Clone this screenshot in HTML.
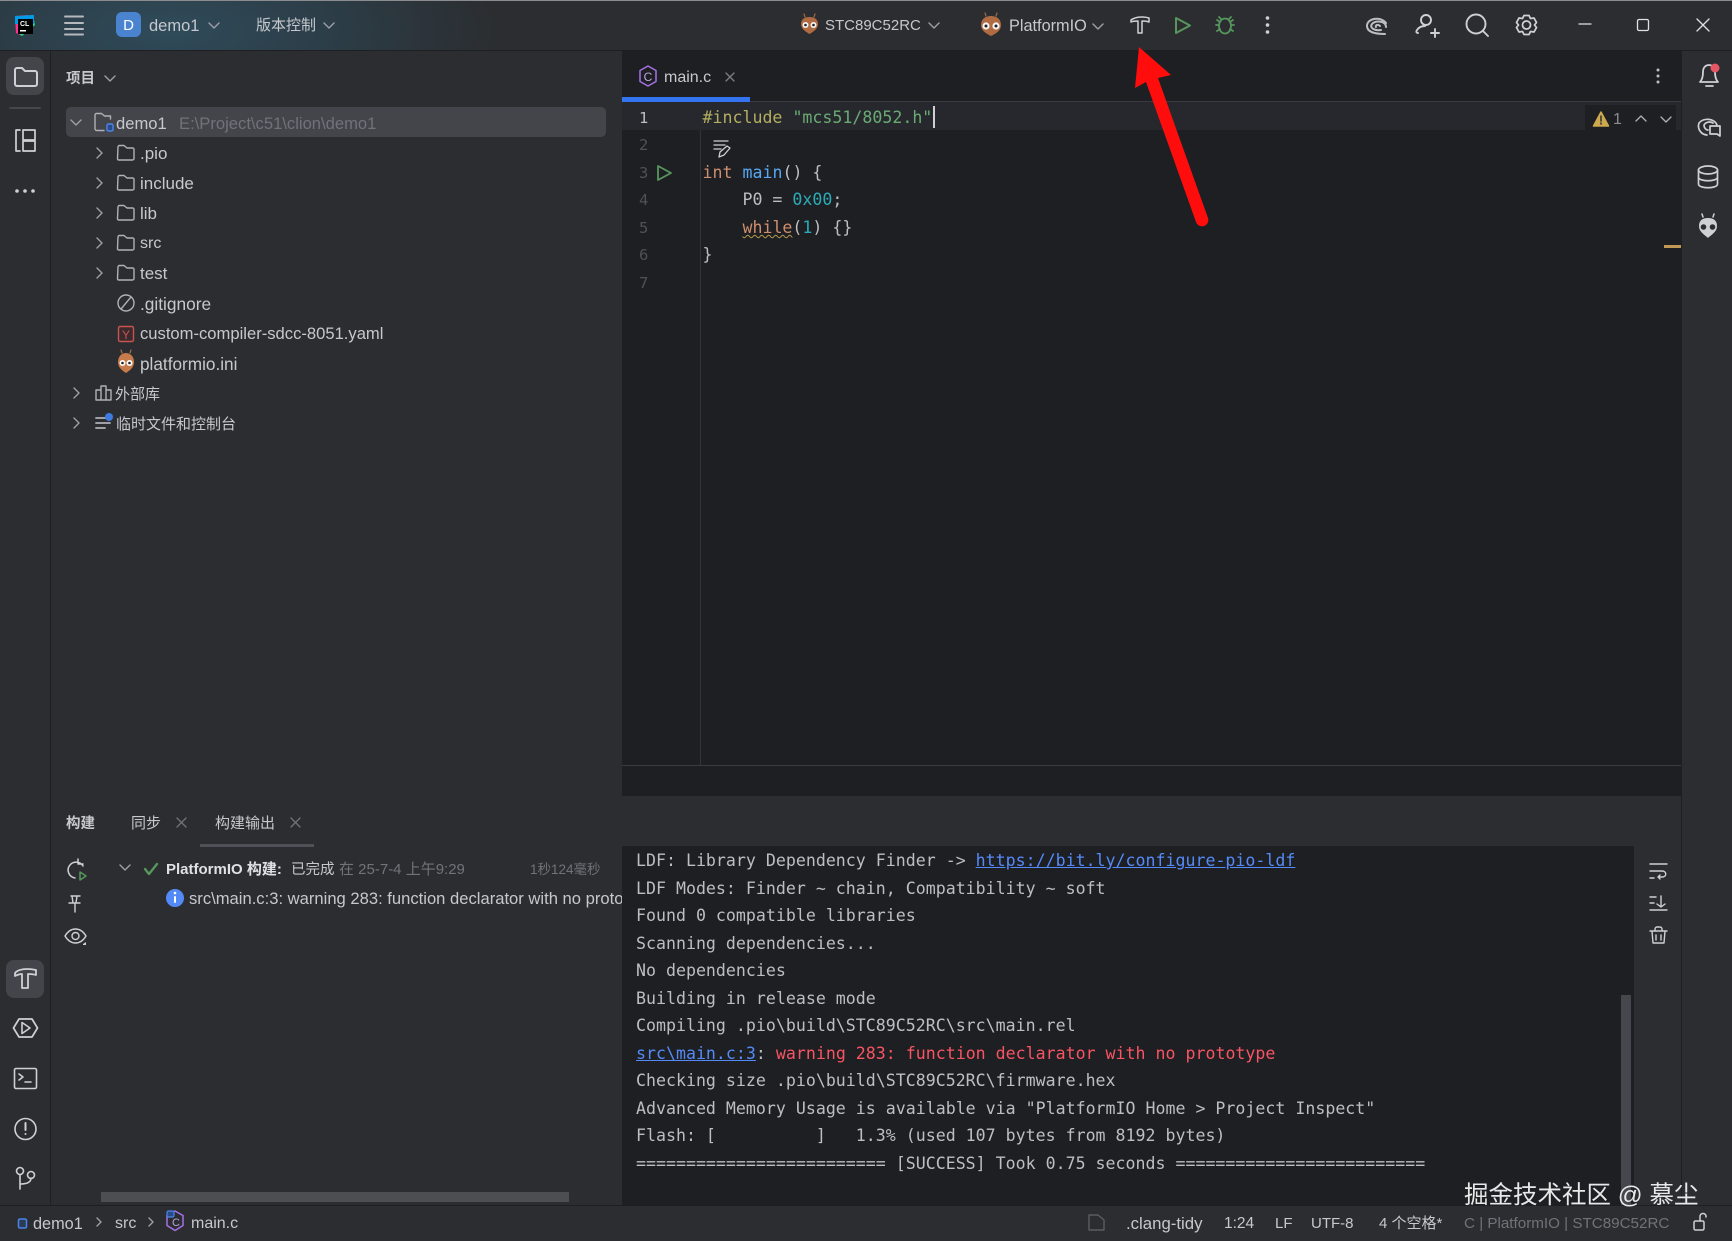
<!DOCTYPE html>
<html><head><meta charset="utf-8"><style>
*{box-sizing:border-box}
html,body{margin:0;padding:0;width:1732px;height:1241px;overflow:hidden;background:#1e1f22}
body{position:relative;font-family:"Liberation Sans","Noto Sans CJK SC",sans-serif;color:#bcbec4}
.b{position:absolute}
.t{position:absolute;white-space:pre;font-size:16.6px;line-height:20px;height:20px;margin-top:1px;color:#c6c8ce}
.m{position:absolute;white-space:pre;left:636px;font-family:"DejaVu Sans Mono","Liberation Mono",monospace;font-size:16.6px;line-height:20px;height:20px;color:#bcbec4}
.e{left:702.5px}
.n{position:absolute;left:639px;font-family:"DejaVu Sans Mono",monospace;font-size:15.5px;line-height:20px;color:#4e5157}
a{color:#548af7;text-decoration:underline}
svg{position:absolute;left:0;top:0}
</style></head><body>
<div class="b" style="left:0;top:0;width:1732px;height:50px;background:radial-gradient(ellipse 330px 130px at 170px 30px,#2f4b5a 0%,#2c3d47 50%,#2b2d30 100%)"></div>
<div class="b" style="left:0;top:0;width:1732px;height:1px;background:#8a8c90"></div>
<div class="b" style="left:0;top:50px;width:622px;height:746px;background:#2b2d30"></div>
<div class="b" style="left:0;top:796px;width:51px;height:409px;background:#2b2d30"></div>
<div class="b" style="left:0;top:50px;width:1732px;height:1px;background:#1e1f22"></div>
<div class="b" style="left:50px;top:51px;width:1px;height:1154px;background:#1e1f22"></div>
<div class="b" style="left:1681px;top:51px;width:51px;height:1154px;background:#2b2d30"></div>
<div class="b" style="left:1681px;top:51px;width:1px;height:1154px;background:#1e1f22"></div>
<div class="b" style="left:51px;top:796px;width:1630px;height:50px;background:#2b2d30"></div>
<div class="b" style="left:51px;top:846px;width:571px;height:359px;background:#2b2d30"></div>
<div class="b" style="left:622px;top:101px;width:1059px;height:1px;background:#393b40"></div>
<div class="b" style="left:622px;top:765px;width:1059px;height:1px;background:#393b40"></div>
<div class="b" style="left:700px;top:102px;width:1px;height:663px;background:#313438"></div>
<div class="b" style="left:622px;top:102px;width:1059px;height:28px;background:#26282e"></div>
<div class="b" style="left:1585px;top:105px;width:91px;height:27px;background:#1e1f22"></div>
<div class="b" style="left:622px;top:97px;width:128px;height:5px;background:#3574f0"></div>
<div class="b" style="left:1634px;top:846px;width:47px;height:359px;background:#2b2d30"></div>
<div class="b" style="left:0;top:1205px;width:1732px;height:36px;background:#2b2d30;border-top:1px solid #1e1f22"></div>
<div class="b" style="left:66px;top:107px;width:540px;height:30px;background:#43454a;border-radius:5px"></div>
<div class="b" style="left:6px;top:57px;width:38px;height:38px;background:#43454a;border-radius:8px"></div>
<div class="b" style="left:6px;top:960px;width:38px;height:38px;background:#43454a;border-radius:8px"></div>
<div class="b" style="left:200px;top:844px;width:114px;height:3px;background:#4e5157"></div>
<div class="b" style="left:101px;top:1192px;width:468px;height:10px;background:#4c4e52"></div>
<div class="b" style="left:1621px;top:995px;width:10px;height:210px;background:#45474c"></div>
<div class="b" style="left:1664px;top:245px;width:17px;height:3px;background:#c09a55"></div>
<div class="b" style="left:933px;top:106px;width:2px;height:22px;background:#ced0d6"></div>

<!-- titlebar text -->
<span class="t" style="left:149px;top:15px;font-size:16.5px">demo1</span>
<span class="t" style="left:256px;top:15px;font-size:15px">版本控制</span>
<span class="t" style="left:825px;top:15px;font-size:15px">STC89C52RC</span>
<span class="t" style="left:1009px;top:15px;font-size:16.3px">PlatformIO</span>

<!-- project panel -->
<span class="t" style="left:66px;top:68px;font-size:14.5px;font-weight:bold">项目</span>
<span class="t" style="left:116px;top:113px">demo1</span>
<span class="t" style="left:179px;top:113px;color:#6f737a">E:\Project\c51\clion\demo1</span>
<span class="t" style="left:140px;top:143px;font-size:17px">.pio</span>
<span class="t" style="left:140px;top:173px;font-size:17px">include</span>
<span class="t" style="left:140px;top:203px;font-size:17px">lib</span>
<span class="t" style="left:140px;top:233px;font-size:16px">src</span>
<span class="t" style="left:140px;top:263px;font-size:17px">test</span>
<span class="t" style="left:140px;top:293px;font-size:17.3px">.gitignore</span>
<span class="t" style="left:140px;top:323px">custom-compiler-sdcc-8051.yaml</span>
<span class="t" style="left:140px;top:353px;font-size:17.2px">platformio.ini</span>
<span class="t" style="left:115px;top:383.500px;font-size:15px">外部库</span>
<span class="t" style="left:116px;top:413.500px;font-size:15px">临时文件和控制台</span>

<!-- editor -->
<span class="t" style="left:664px;top:67px;font-size:16px">main.c</span>
<span class="n" style="top:108px;color:#bcbec4">1</span>
<span class="n" style="top:135px">2</span>
<span class="n" style="top:163px">3</span>
<span class="n" style="top:190px">4</span>
<span class="n" style="top:218px">5</span>
<span class="n" style="top:245px">6</span>
<span class="n" style="top:273px">7</span>
<span class="m e" style="top:108px"><span style="color:#b3ae60">#include</span> <span style="color:#6aab73">"mcs51/8052.h"</span></span>
<span class="m e" style="top:163px"><span style="color:#cf8e6d">int</span> <span style="color:#56a8f5">main</span>() {</span>
<span class="m e" style="top:190px">    P0 = <span style="color:#2aacb8">0x00</span>;</span>
<span class="m e" style="top:218px">    <span style="color:#cf8e6d;text-decoration:underline wavy #b59a4e;text-decoration-thickness:1px">while</span>(<span style="color:#2aacb8">1</span>) {}</span>
<span class="m e" style="top:245px">}</span>
<span class="t" style="left:1613px;top:109px;color:#8a8c90;font-size:16px">1</span>

<!-- build tabs -->
<span class="t" style="left:66px;top:813px;font-size:14.5px;font-weight:bold">构建</span>
<span class="t" style="left:131px;top:813px;font-size:15px">同步</span>
<span class="t" style="left:215px;top:813px;font-size:15px">构建输出</span>

<!-- build tree -->
<span class="t" style="left:166px;top:859px;font-size:15px"><b style="color:#dfe1e5">PlatformIO 构建:</b></span>
<span class="t" style="left:291px;top:859px;font-size:14.5px">已完成</span>
<span class="t" style="left:339px;top:859px;font-size:15px;color:#6f737a">在 25-7-4 上午9:29</span>
<span class="t" style="left:530px;top:859px;font-size:13.5px;color:#6f737a">1秒124毫秒</span>
<div class="b" style="left:189px;top:888px;width:433px;height:22px;overflow:hidden"><span class="t" style="left:0;top:0">src\main.c:3: warning 283: function declarator with no prototype</span></div>

<!-- build output -->
<span class="m" style="top:851px">LDF: Library Dependency Finder -&gt; <a>https://bit.ly/configure-pio-ldf</a></span>
<span class="m" style="top:879px">LDF Modes: Finder ~ chain, Compatibility ~ soft</span>
<span class="m" style="top:906px">Found 0 compatible libraries</span>
<span class="m" style="top:934px">Scanning dependencies...</span>
<span class="m" style="top:961px">No dependencies</span>
<span class="m" style="top:989px">Building in release mode</span>
<span class="m" style="top:1016px">Compiling .pio\build\STC89C52RC\src\main.rel</span>
<span class="m" style="top:1044px"><a>src\main.c:3</a>: <span style="color:#f75464">warning 283: function declarator with no prototype</span></span>
<span class="m" style="top:1071px">Checking size .pio\build\STC89C52RC\firmware.hex</span>
<span class="m" style="top:1099px">Advanced Memory Usage is available via "PlatformIO Home &gt; Project Inspect"</span>
<span class="m" style="top:1126px">Flash: [          ]   1.3% (used 107 bytes from 8192 bytes)</span>
<span class="m" style="top:1154px">========================= [SUCCESS] Took 0.75 seconds =========================</span>

<!-- status -->
<span class="t" style="left:33px;top:1212.500px;font-size:16.3px">demo1</span>
<span class="t" style="left:115px;top:1212.500px;font-size:16px">src</span>
<span class="t" style="left:191px;top:1212.500px;font-size:16px">main.c</span>
<span class="t" style="left:1126px;top:1212.500px;font-size:16.8px">.clang-tidy</span>
<span class="t" style="left:1224px;top:1212.500px;font-size:15.5px">1:24</span>
<span class="t" style="left:1275px;top:1212.500px;font-size:15px">LF</span>
<span class="t" style="left:1311px;top:1212.500px;font-size:15px">UTF-8</span>
<span class="t" style="left:1379px;top:1212.500px;font-size:15px">4 个空格*</span>
<span class="t" style="left:1464px;top:1212.500px;font-size:15.2px;color:#6f737a">C | PlatformIO | STC89C52RC</span>

<svg width="1732" height="1241" viewBox="0 0 1732 1241" fill="none" stroke="#ced0d6" stroke-width="1.6" stroke-linecap="round" stroke-linejoin="round">
<!-- CLion logo -->
<g stroke="none"><path d="M15 17 L33 15 L35 25 L22 36 L17 33Z" fill="#21d789"/><path d="M15 16 L28 15 L20 35 L16 33Z" fill="#ff318c"/><path d="M15 16 L34 15 L34 24 L24 24 L15 24Z" fill="#009ae5"/><rect x="18" y="19" width="15" height="15" fill="#000"/><rect x="20" y="30" width="6" height="1.5" fill="#fff"/></g>
<text x="20" y="26" font-family="Liberation Sans" font-size="7" font-weight="bold" fill="#fff" stroke="none">CL</text>
<!-- menu -->
<g stroke="#b6b8be" stroke-width="2"><path d="M65 16.5H83M65 23H83M65 29H83M65 34.5H83"/></g>
<!-- D -->
<rect x="116" y="12" width="25" height="25" rx="6" fill="#4a84d0" stroke="none"/>
<text x="128.5" y="30" text-anchor="middle" font-family="Liberation Sans" font-size="15" fill="#fff" stroke="none">D</text>
<!-- chevrons -->
<g stroke="#9da0a8" stroke-width="1.4"><path d="M209 23l5 5 5-5M324 23l5 5 5-5M105 76l5 5 5-5M929 23l5 5 5-5M1093 24l5 5 5-5"/>
<path d="M71 120l5 5 5-5M120 865l5 5 5-5"/>
<path d="M97 148l5 5-5 5M97 178l5 5-5 5M97 208l5 5-5 5M97 238l5 5-5 5M97 268l5 5-5 5M74 388l5 5-5 5M74 418l5 5-5 5"/>
<path d="M97 1218l4 4-4 4M149 1218l4 4-4 4"/></g>
<!-- left strip icons -->
<path d="M15 70a2 2 0 0 1 2-2h5l3 3h10a2 2 0 0 1 2 2v11a2 2 0 0 1-2 2H17a2 2 0 0 1-2-2Z" stroke-width="2"/>
<path d="M10 108H40" stroke="#45474c" stroke-width="2"/>
<path d="M20 130h-4v21h4M23 130h12v10H23ZM23 141h12v10H23Z" stroke-width="1.7"/>
<g fill="#ced0d6" stroke="none"><circle cx="17" cy="191" r="1.8"/><circle cx="25" cy="191" r="1.8"/><circle cx="33" cy="191" r="1.8"/></g>
<path d="M15 973c3-4 12-5 21-3l0 5c-3-1-6-1-8-1v14h-6V974c-2 0-5 1-7 2Z" stroke-width="1.8"/>
<path d="M13.500 1028L19 1019H32L37.500 1028L32 1037H19Z" stroke-width="1.7"/><path d="M22 1022.500l8 5.500-8 5.500Z" stroke-width="1.6"/>
<rect x="14.500" y="1068.500" width="22" height="20" rx="1.500"/><path d="M19 1074l4 3-4 3M25 1082h6"/>
<circle cx="25.500" cy="1129" r="10.500"/><path d="M25.500 1123v7" stroke-width="2"/><circle cx="25.500" cy="1134" r="1" fill="#ced0d6" stroke="none"/>
<circle cx="20" cy="1171" r="3.500"/><circle cx="31" cy="1175" r="3.500"/><path d="M20 1175v14M20 1184c6 0 11-1 11-6"/>
<!-- tree icons -->
<g stroke="#afb1b7" stroke-width="1.4"><path d="M95 115a1.500 1.500 0 0 1 1.500-1.500h5l3 2.500h6v3M95 115v14a2 2 0 0 0 2 1.500h7"/>
<path d="M118 147a1.500 1.500 0 0 1 1.500-1.500h4.500l3 2.500h6a1.500 1.500 0 0 1 1 1.500v9a1.500 1.500 0 0 1-1.500 1.500h-14a1.500 1.500 0 0 1-1-1.500Z"/>
<path d="M118 177a1.500 1.500 0 0 1 1.500-1.500h4.500l3 2.500h6a1.500 1.500 0 0 1 1 1.500v9a1.500 1.500 0 0 1-1.500 1.500h-14a1.500 1.500 0 0 1-1-1.500Z"/>
<path d="M118 207a1.500 1.500 0 0 1 1.500-1.500h4.500l3 2.500h6a1.500 1.500 0 0 1 1 1.500v9a1.500 1.500 0 0 1-1.500 1.500h-14a1.500 1.500 0 0 1-1-1.500Z"/>
<path d="M118 237a1.500 1.500 0 0 1 1.500-1.500h4.500l3 2.500h6a1.500 1.500 0 0 1 1 1.500v9a1.500 1.500 0 0 1-1.500 1.500h-14a1.500 1.500 0 0 1-1-1.500Z"/>
<path d="M118 267a1.500 1.500 0 0 1 1.500-1.500h4.500l3 2.500h6a1.500 1.500 0 0 1 1 1.500v9a1.500 1.500 0 0 1-1.500 1.500h-14a1.500 1.500 0 0 1-1-1.500Z"/>
<circle cx="126" cy="303" r="8"/><path d="M121 309l10-12"/>
<path d="M96 390h5v10h-5ZM101 386h5v14h-5ZM106 390h5v10h-5Z"/>
<path d="M96 418h11M96 423h14M96 428h9" stroke-width="1.8"/></g>
<rect x="107" y="124" width="6" height="7" rx="1.500" fill="#2b4a8a" stroke="#4a86e8" stroke-width="1.400"/>
<circle cx="109" cy="417" r="4" fill="#3d7be0" stroke="none"/>
<rect x="118.500" y="326.500" width="15" height="15" rx="1.500" stroke="#c75450" fill="#3a2a2d" stroke-width="1.400"/>
<text x="126" y="339" text-anchor="middle" font-family="Liberation Sans" font-size="12" fill="#c75450" stroke="none">Y</text>
<!-- ants -->
<g stroke="none"><path d="M118 362c0-6 4-9 8-9s8 3 8 9-5 9-8 11c-3-2-8-5-8-11Z" fill="#c77b4a"/><circle cx="122.500" cy="363" r="3" fill="#fff"/><circle cx="129.500" cy="363" r="3" fill="#fff"/><circle cx="122.500" cy="363" r="1.300" fill="#222"/><circle cx="129.500" cy="363" r="1.300" fill="#222"/></g>
<path d="M122 353l-1-3M130 353l1-3" stroke="#a0703f" stroke-width="1.200"/>
<g stroke="none"><path d="M801 24c0-5 4-7 8.500-7s8.500 2 8.500 7-5 8-8.500 10c-3.500-2-8.500-5-8.500-10Z" fill="#b06b42"/><circle cx="805.500" cy="25" r="3" fill="#f4f4f4"/><circle cx="813.500" cy="25" r="3" fill="#f4f4f4"/><circle cx="805.500" cy="25" r="1.300" fill="#222"/><circle cx="813.500" cy="25" r="1.300" fill="#222"/></g>
<path d="M805 17l-1-3M814 17l1-3" stroke="#9a6a45" stroke-width="1.200"/>
<g stroke="none"><path d="M981 25c0-6 4.500-9 10-9s10 3 10 9-6 9-10 11c-4-2-10-5-10-11Z" fill="#b06b42"/><circle cx="986" cy="26" r="3.600" fill="#f4f4f4"/><circle cx="996" cy="26" r="3.600" fill="#f4f4f4"/><circle cx="986" cy="26" r="1.500" fill="#222"/><circle cx="996" cy="26" r="1.500" fill="#222"/></g>
<path d="M986 16l-1-3M996 16l1-3" stroke="#9a6a45" stroke-width="1.200"/>
<!-- toolbar -->
<path d="M1131 20c4-3 12-4 18-2l0 4c-3-1-5-1-7-1v12h-4V21c-2 0-5 0-7 1Z" stroke-width="1.500"/>
<path d="M1176 18l14 7.500-14 7.500Z" stroke="#57965c" stroke-width="2"/>
<g stroke="#57965c" stroke-width="1.800"><ellipse cx="1225" cy="26" rx="6" ry="7.500"/><path d="M1221 19l-2-2M1229 19l2-2M1216 25h3M1231 25h3M1217 20l3 2M1233 20l-3 2M1217 31l3-2M1233 31l-3-2"/></g>
<g fill="#ced0d6" stroke="none"><circle cx="1267.500" cy="18" r="1.800"/><circle cx="1267.500" cy="25" r="1.800"/><circle cx="1267.500" cy="32" r="1.800"/></g>
<path d="M1386 23C1381 16 1367 18 1367 26C1367 31 1373 34 1385 34M1386 27C1386 21 1376 20 1372 24C1369 28 1375 31 1381 30M1380 26C1378 24 1375 25 1376 27" stroke-width="2" stroke="#bcbec4"/>
<circle cx="1426" cy="20" r="5" stroke-width="1.900"/><path d="M1418 33c-2 0-2-2-1-3 2-3 5-4 8-4M1431 33h8M1435 29v8" stroke-width="1.900"/>
<circle cx="1476" cy="24" r="9.500" stroke-width="1.900"/><path d="M1483 31l5 5" stroke-width="1.900"/>
<path d="M1524 15.500h5l1.500 3 3.500-.5 2.500 4.500-2 2.500 2 2.500-2.500 4.500-3.500-.5-1.500 3h-5l-1.500-3-3.500.5-2.500-4.500 2-2.500-2-2.500 2.500-4.500 3.500.5Z" stroke-width="1.800"/><circle cx="1526.500" cy="25" r="4" stroke-width="1.800"/>
<path d="M1579 24h12M1697 19l12 12M1709 19l-12 12" stroke="#dfe1e5" stroke-width="1.300"/>
<rect x="1637.500" y="19.500" width="11" height="11" rx="1.500" stroke="#dfe1e5" stroke-width="1.300"/>
<!-- tab -->
<path d="M648 66l8 4.500v11L648 86l-8-4.500v-11Z" stroke="#a571e6" stroke-width="1.500"/>
<text x="648" y="81" text-anchor="middle" font-family="Liberation Sans" font-size="12" fill="#bda5e0" stroke="none">C</text>
<path d="M726 73l8 8M734 73l-8 8" stroke="#7a7e85" stroke-width="1.300"/>
<g fill="#bcbec4" stroke="none"><circle cx="1658" cy="70" r="1.500"/><circle cx="1658" cy="76" r="1.500"/><circle cx="1658" cy="82" r="1.500"/></g>
<!-- warning -->
<path d="M1601 112l7.500 14h-15Z" fill="#cda94e" stroke="#cda94e" stroke-width="1.500"/><path d="M1601 116v5M1601 123v1" stroke="#2b2d30" stroke-width="1.500"/>
<path d="M1636 121l5-5 5 5M1661 117l5 5 5-5" stroke-width="1.300" stroke="#afb1b7"/>
<!-- gutter icons -->
<path d="M658 166l13 7-13 7Z" stroke="#57965c" stroke-width="1.800"/>
<path d="M714 141h14M714 145h11M714 149h7M719 157l1-5 7-6 3 2-6 7Z" stroke-width="1.300"/>
<!-- right strip -->
<path d="M1700 82c2-2 3-5 3-10s3-7 6-7 6 2 6 7 1 8 3 10ZM1706 86h7" stroke-width="1.800"/><circle cx="1715" cy="68" r="4.500" fill="#e55765" stroke="none"/>
<path d="M1717 125a10 8 0 0 0-18-2 9 9 0 0 0 8 12M1713 123a6 5 0 0 0-9 2c0 3 2 5 4 5" stroke-width="1.700"/><path d="M1710 126h10v10l-3-2h-7Z" stroke-width="1.700"/>
<ellipse cx="1708" cy="170" rx="9.500" ry="4" stroke-width="1.700"/><path d="M1698.500 170v14c0 5 19 5 19 0v-14M1698.500 177c0 5 19 5 19 0" stroke-width="1.700"/>
<path d="M1699 226c0-6 4-8 9-8s9 2 9 8-6 9-9 12c-3-3-9-6-9-12Z" fill="#ced0d6" stroke="none"/><circle cx="1703.500" cy="227" r="2.800" fill="#2b2d30" stroke="none"/><circle cx="1712.500" cy="227" r="2.800" fill="#2b2d30" stroke="none"/><path d="M1703 217l-1-3M1713 217l1-3" stroke-width="1.500"/>
<!-- build toolbar -->
<path d="M83 866a8 8 0 1 0-8 12M78 859v5h5" stroke-width="1.500"/><path d="M80 872l6 4-6 4Z" stroke="#57965c" stroke-width="1.500"/>
<path d="M71 896h9M72 896l1 7h3l1-7M69 903h11M75 903v9" stroke-width="1.400"/>
<path d="M65 936c3-5 7-7 10.500-7s7.500 2 10.500 7c-3 5-7 7-10.500 7s-7.500-2-10.500-7Z" stroke-width="1.400"/><circle cx="75.500" cy="936" r="3.500" stroke-width="1.400"/><path d="M83 944l3-2v3h-3Z" fill="#ced0d6" stroke="none"/>
<path d="M145 869l4 5 8-10" stroke="#57965c" stroke-width="2.400"/>
<circle cx="175" cy="898" r="9" fill="#548af7" stroke="none"/><path d="M175 897v5" stroke="#fff" stroke-width="2"/><circle cx="175" cy="893" r="1.300" fill="#fff" stroke="none"/>
<path d="M177 818l9 9M186 818l-9 9M291 818l9 9M300 818l-9 9" stroke="#6f737a" stroke-width="1.300"/>
<!-- output toolbar -->
<path d="M1650 864h17M1650 871h12c5 0 5 6 0 6h-4M1660 875l-2 2 2 2M1650 878h4" stroke-width="1.400"/>
<path d="M1650 897h6M1650 903h4M1650 910h17M1661 896v11M1657 904l4 3 4-3" stroke-width="1.400"/>
<path d="M1650 931h17M1655 931v-2a2 2 0 0 1 2-2h3a2 2 0 0 1 2 2v2M1652 931l1 12h11l1-12M1656 935v5M1661 935v5" stroke-width="1.400"/>
<!-- status icons -->
<rect x="18.500" y="1219" width="8" height="9" rx="1.500" stroke="#4a86e8" fill="#2b3a55" stroke-width="1.500"/>
<path d="M175 1211l8 4.500v10l-8 5-8-5v-10Z" stroke="#a571e6" stroke-width="1.500"/><rect x="167" y="1211" width="7" height="6" rx="1.500" fill="#2b4a8a" stroke="#4a86e8" stroke-width="1.200"/>
<text x="176" y="1226" text-anchor="middle" font-family="Liberation Sans" font-size="11" fill="#bda5e0" stroke="none">C</text>
<path d="M1089 1215h9l6 5v10h-15Z" stroke="#5a5d63" stroke-width="1.400"/>
<rect x="1694" y="1221" width="10" height="9" rx="1.500" stroke-width="1.500"/><path d="M1700 1221v-4a3 3 0 0 1 6-1v1" stroke-width="1.500"/>
<!-- red arrow -->
<g stroke="none" fill="#ff0d0d"><path d="M1139 47L1171 75 1158 78 1208 218a6 6 0 0 1-12 4L1146 82 1135 88Z"/></g>
<!-- watermark -->
<text x="1464" y="1203" font-family="Liberation Sans, Noto Sans CJK SC, sans-serif" font-size="24.5" fill="#e8e8e8" stroke="none">掘金技术社区 @ 慕尘</text>
</svg>
</body></html>
